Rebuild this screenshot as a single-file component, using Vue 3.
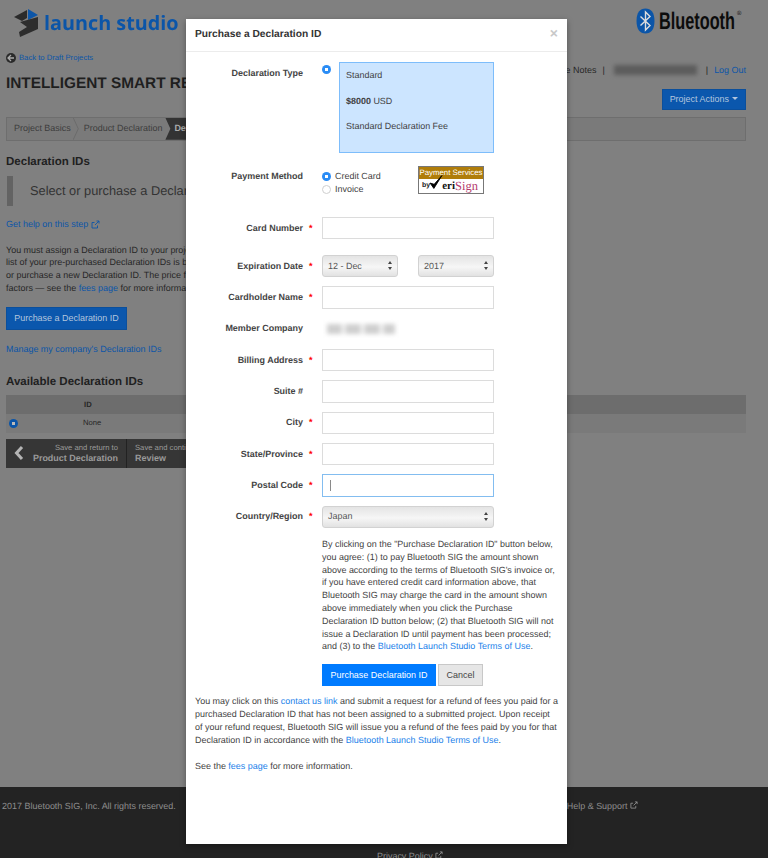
<script setup>
const rows = [
  { label: "Card Number", required: true, top: 16 },
  { label: "Expiration Date", required: true, kind: "expiry" },
  { label: "Cardholder Name", required: true },
  { label: "Member Company", kind: "company" },
  { label: "Billing Address", required: true },
  { label: "Suite #" },
  { label: "City", required: true },
  { label: "State/Province", required: true },
  { label: "Postal Code", required: true, kind: "focus" },
  { label: "Country/Region", required: true, kind: "country" },
];
</script>

<template>
  <div class="page">
    <header class="top">
      <div class="brand">
        <svg class="ls-mark" width="26" height="30" viewBox="0 0 26 30">
          <polygon points="1,9 14,2 14,10 9,13" fill="#2b2b2b" />
          <polygon points="15,1 25,7 15,12" fill="#0b55a8" />
          <polygon points="7,14 25,9 25,21 7,29 6,24 14,19" fill="#2d2d2d" />
        </svg>
        <span class="ls-name">launch studio</span>
      </div>
      <div class="bt">
        <svg width="19" height="26" viewBox="0 0 19 26">
          <path d="M9.5 0.5C15 0.5 18.5 4.5 18.5 13S15 25.5 9.5 25.5 0.5 21.5 0.5 13 4 0.5 9.5 0.5Z" fill="#0b55a8" />
          <path d="M4.5 8.5L14 17.5 9.5 22V4L14 8.5 4.5 17.5" fill="none" stroke="#ddd" stroke-width="1.4" />
        </svg>
        <svg class="bt-word" width="84" height="26" viewBox="0 0 84 26">
          <text x="0" y="21" textLength="76" lengthAdjust="spacingAndGlyphs" class="bt-text">Bluetooth</text>
          <text x="78" y="7" class="bt-reg">®</text>
        </svg>
      </div>
    </header>

    <a class="back link">
      <svg width="10" height="10" viewBox="0 0 10 10">
        <circle cx="5" cy="5" r="5" fill="#2a2a2a" />
        <path d="M5 2L2 5 5 8M2.4 5H8" fill="none" stroke="#aaa" stroke-width="1.3" />
      </svg>
      Back to Draft Projects
    </a>

    <div class="title-row">
      <h1>INTELLIGENT SMART REMOTE</h1>
      <div class="user">
        <span>Release Notes</span>
        <span class="sep">|</span>
        <span class="blurred"></span>
        <span class="sep">|</span>
        <a class="link">Log Out</a>
      </div>
    </div>
    <div class="actions-row">
      <button class="btn-blue actions">Project Actions <i class="caret"></i></button>
    </div>

    <nav class="crumbs">
      <span class="crumb">Project Basics</span>
      <span class="chev"></span>
      <span class="crumb">Product Declaration</span>
      <span class="crumb current">Declaration IDs</span>
    </nav>

    <h2>Declaration IDs</h2>
    <div class="callout">Select or purchase a Declaration ID</div>
    <a class="link help">Get help on this step
      <svg width="9" height="9" viewBox="0 0 9 9" fill="none" stroke="#0b55a8" stroke-width="0.9">
        <path d="M6.5 5.5V8H1V2.5H3.5M4 5L8 1M5.5 1H8V3.5" />
      </svg>
    </a>
    <p class="intro">
      You must assign a Declaration ID to your project before it can be submitted. A<br />
      list of your pre-purchased Declaration IDs is below.<br />
      or purchase a new Declaration ID. The price for a Declaration ID depends on several<br />
      factors — see the <a class="link">fees page</a> for more information.
    </p>
    <button class="btn-blue purchase">Purchase a Declaration ID</button>
    <a class="link manage">Manage my company's Declaration IDs</a>

    <h2 class="avail">Available Declaration IDs</h2>
    <div class="table-head"><span>ID</span></div>
    <div class="table-row">
      <span class="dot"></span>
      <span>None</span>
    </div>
    <div class="save-bar">
      <div class="save back-save">
        <svg width="10" height="16" viewBox="0 0 10 16">
          <path d="M8 2L2.5 8 8 14" fill="none" stroke="#b5b5b5" stroke-width="3" />
        </svg>
        <div class="save-text right"><small>Save and return to</small><b>Product Declaration</b></div>
      </div>
      <div class="save">
        <div class="save-text"><small>Save and continue to</small><b>Review</b></div>
      </div>
    </div>

    <footer class="foot">
      <div class="foot-row">
        <span class="copy">© 2017 Bluetooth SIG, Inc. All rights reserved.</span>
        <span class="support">Help &amp; Support
          <svg width="8" height="8" viewBox="0 0 9 9" fill="none" stroke="#999" stroke-width="0.9">
            <path d="M6.5 5.5V8H1V2.5H3.5M4 5L8 1M5.5 1H8V3.5" />
          </svg>
        </span>
      </div>
      <div class="privacy">Privacy Policy
        <svg width="8" height="8" viewBox="0 0 9 9" fill="none" stroke="#999" stroke-width="0.9">
          <path d="M6.5 5.5V8H1V2.5H3.5M4 5L8 1M5.5 1H8V3.5" />
        </svg>
      </div>
    </footer>

    <section class="modal">
      <div class="modal-head">
        <span class="modal-title">Purchase a Declaration ID</span>
        <span class="close">×</span>
      </div>

      <div class="type-row">
        <label class="field-label">Declaration Type</label>
        <span class="radio on type-radio"></span>
        <div class="type-box">
          <p>Standard</p>
          <p><b>$8000</b> USD</p>
          <p>Standard Declaration Fee</p>
        </div>
      </div>

      <div class="pay-row">
        <label class="field-label">Payment Method</label>
        <div class="pay-options">
          <div class="opt"><span class="radio on"></span>Credit Card</div>
          <div class="opt"><span class="radio"></span>Invoice</div>
        </div>
        <div class="verisign">
          <div class="vs-top">Payment Services</div>
          <div class="vs-bottom">
            <span class="vs-by">by</span>
            <svg class="vs-check" width="14" height="17" viewBox="0 0 13 15">
              <path d="M1 8L4.5 13 12 1 4.8 9.2Z" fill="#000" stroke="#000" stroke-width="0.8" />
            </svg>
            <span class="vs-v">eri</span><span class="vs-s">Sign</span>
          </div>
        </div>
      </div>

      <div
        v-for="row in rows"
        :key="row.label"
        class="form-row"
        :class="{ 'tall-gap': row.top, 'expiry-row': row.kind === 'expiry' }"
      >
        <label class="field-label">{{ row.label }}</label>
        <span class="star">{{ row.required ? "*" : "" }}</span>
        <div v-if="row.kind === 'expiry'" class="expiry">
          <div class="select"><span>12 - Dec</span><i class="updown"></i></div>
          <div class="select"><span>2017</span><i class="updown"></i></div>
        </div>
        <div v-else-if="row.kind === 'company'" class="company"></div>
        <div v-else-if="row.kind === 'country'" class="select wide"><span>Japan</span><i class="updown"></i></div>
        <div v-else class="input" :class="{ focus: row.kind === 'focus' }">
          <i v-if="row.kind === 'focus'" class="cursor"></i>
        </div>
      </div>

      <p class="terms">
        By clicking on the "Purchase Declaration ID" button below,<br />
        you agree: (1) to pay Bluetooth SIG the amount shown<br />
        above according to the terms of Bluetooth SIG's invoice or,<br />
        if you have entered credit card information above, that<br />
        Bluetooth SIG may charge the card in the amount shown<br />
        above immediately when you click the Purchase<br />
        Declaration ID button below; (2) that Bluetooth SIG will not<br />
        issue a Declaration ID until payment has been processed;<br />
        and (3) to the <a class="mlink">Bluetooth Launch Studio Terms of Use</a>.
      </p>

      <div class="modal-buttons">
        <button class="confirm">Purchase Declaration ID</button>
        <button class="cancel">Cancel</button>
      </div>

      <p class="refund">
        You may click on this <a class="mlink">contact us link</a> and submit a request for a refund of fees you paid for a<br />
        purchased Declaration ID that has not been assigned to a submitted project. Upon receipt<br />
        of your refund request, Bluetooth SIG will issue you a refund of the fees paid by you for that<br />
        Declaration ID in accordance with the <a class="mlink">Bluetooth Launch Studio Terms of Use</a>.
      </p>
      <p class="refund see">See the <a class="mlink">fees page</a> for more information.</p>
    </section>
  </div>
</template>

<style>
html,
body {
  margin: 0;
  height: 100%;
  overflow: hidden;
}
</style>

<style scoped>
.page {
  position: relative;
  width: 768px;
  height: 858px;
  overflow: hidden;
  background: #808080;
  color: #262626;
  font-family: "Liberation Sans", Arial, sans-serif;
  font-size: 8.96px;
  line-height: 12.8px;
  text-rendering: geometricPrecision;
  display: flex;
  flex-direction: column;
}

.link {
  color: #0b55a8;
}

.top {
  height: 48px;
  padding: 7px 25px 0 13px;
  box-sizing: border-box;
  display: flex;
  justify-content: space-between;
  flex-shrink: 0;
}

.brand {
  display: flex;
  align-items: center;
  height: 32px;
  gap: 5px;
  filter: blur(0.3px);
}

.ls-name {
  font-family: "Open Sans", sans-serif;
  font-weight: 700;
  font-size: 19.8px;
  color: #0b55a8;
}

.bt {
  display: flex;
  gap: 4px;
  margin-top: 1px;
  height: 26px;
}

.bt-text {
  font-family: "Liberation Sans", sans-serif;
  font-weight: 700;
  font-size: 24px;
  fill: #0c0c0c;
}

.bt-reg {
  font-size: 6px;
  fill: #0c0c0c;
}

.back {
  display: flex;
  align-items: center;
  gap: 3px;
  margin: 4px 0 0 6px;
  font-size: 7.68px;
}

.title-row {
  display: flex;
  justify-content: space-between;
  align-items: flex-start;
  margin: 9px 22px 0 6px;
  height: 20px;
}

h1 {
  margin: 0;
  font-size: 15.36px;
  line-height: 20px;
  color: #1f1f1f;
  white-space: nowrap;
}

.user {
  display: flex;
  align-items: center;
  gap: 6px;
  margin-top: -10px;
}

.sep {
  color: #262626;
}

.blurred {
  width: 83px;
  height: 10px;
  margin: 0 3px;
  background: #5c5c5c;
  filter: blur(2px);
}

.actions-row {
  display: flex;
  justify-content: flex-end;
  margin: -5px 22px 0 0;
}

.btn-blue {
  border: 1px solid #0b4f9c;
  background: #0b57ad;
  color: #b4c6dd;
  font: inherit;
  padding: 0;
}

.actions {
  width: 84px;
  height: 21px;
}

.caret {
  display: inline-block;
  border: 3px solid transparent;
  border-top-color: #b4c6dd;
  border-bottom: 0;
  vertical-align: 2px;
  margin-left: 1px;
}

.crumbs {
  display: flex;
  align-items: center;
  height: 24px;
  box-sizing: border-box;
  margin: 7px 22px 0 6px;
  padding-left: 7px;
  background: #7a7a7a;
  border: 1px solid #6e6e6e;
  color: #3c3c3c;
  flex-shrink: 0;
}

.chev {
  width: 6px;
  height: 22px;
  margin: 0 5px 0 2px;
  background: #6a6a6a;
  clip-path: polygon(0 0, 15% 0, 100% 50%, 15% 100%, 0 100%, 85% 50%);
}

.crumb.current {
  margin-left: 3px;
  padding: 0 12px 0 9px;
  background: #333;
  color: #aaa;
  align-self: stretch;
  display: flex;
  align-items: center;
  font-weight: 700;
  clip-path: polygon(0 0, 100% 0, 100% 100%, 0 100%, 5px 50%);
}

h2 {
  margin: 13px 0 0 6px;
  font-size: 11.52px;
  line-height: 16px;
  color: #1f1f1f;
}

.callout {
  height: 30px;
  margin: 6px 0 0 7px;
  padding-left: 17px;
  border-left: 6px solid #636363;
  font-size: 12.8px;
  line-height: 30px;
  color: #333;
  white-space: nowrap;
  flex-shrink: 0;
}

.help {
  margin: 12px 0 0 6px;
  display: flex;
  align-items: center;
  gap: 3px;
}

.intro {
  margin: 13px 0 0 6px;
  white-space: nowrap;
}

.purchase {
  width: 121px;
  height: 23px;
  margin: 12px 0 0 6px;
  flex-shrink: 0;
}

.manage {
  margin: 13px 0 0 6px;
}

.avail {
  margin-top: 18px;
}

.table-head {
  height: 19px;
  margin: 5px 22px 0 6px;
  background: #6d6d6d;
  padding-left: 78px;
  line-height: 19px;
  font-size: 7.68px;
  font-weight: 700;
  flex-shrink: 0;
}

.table-row {
  height: 19px;
  margin: 0 22px 0 6px;
  background: #7a7a7a;
  display: flex;
  align-items: center;
  gap: 65px;
  padding-left: 3px;
  font-size: 7.68px;
  flex-shrink: 0;
}

.dot {
  width: 9px;
  height: 9px;
  border-radius: 50%;
  background: #0b55a8 radial-gradient(circle, #bbb 1.5px, transparent 2px);
  margin-top: 1px;
}

.save-bar {
  display: flex;
  margin: 6px 0 0 6px;
  height: 29px;
  flex-shrink: 0;
}

.save {
  background: #363636;
  display: flex;
  align-items: center;
  padding: 0 8px;
  width: 220px;
  border-left: 1px solid #222;
  box-sizing: border-box;
}

.back-save {
  width: 120px;
  border-left: 0;
  justify-content: space-between;
  padding: 0 8px 0 8px;
}

.save-text {
  display: flex;
  flex-direction: column;
  color: #9a9a9a;
  line-height: 11px;
  white-space: nowrap;
}

.save-text.right {
  align-items: flex-end;
}

.save-text small {
  font-size: 7.68px;
}

.save-text b {
  font-size: 8.96px;
}

.foot {
  position: absolute;
  left: 0;
  right: 0;
  top: 787px;
  height: 71px;
  background: #232323;
  color: #8e8e8e;
  font-size: 8.96px;
}

.foot-row {
  display: flex;
  justify-content: space-between;
  padding: 13px 130px 0 0;
}

.copy {
  margin-left: -7px;
}

.privacy {
  position: absolute;
  top: 63px;
  left: 377px;
  white-space: nowrap;
}

.modal {
  position: absolute;
  left: 186px;
  top: 19px;
  width: 381px;
  height: 825px;
  background: #fff;
  box-shadow: 0 2px 6px rgba(0, 0, 0, 0.35);
  color: #3f3f3f;
  font-size: 8.96px;
  line-height: 12.8px;
}

.modal-head {
  height: 33px;
  box-sizing: border-box;
  border-bottom: 1px solid #ececec;
  padding: 0 9px;
  display: flex;
  justify-content: space-between;
  align-items: center;
}

.modal-title {
  font-size: 10.24px;
  font-weight: 700;
  color: #333;
  margin-top: 1px;
}

.close {
  font-size: 14px;
  font-weight: 700;
  color: #c9c9c9;
  margin-top: -3px;
}

.field-label {
  width: 117px;
  flex-shrink: 0;
  text-align: right;
  font-weight: 700;
  color: #444;
}

.type-row {
  display: flex;
  margin-top: 10px;
  height: 91px;
}

.type-row .field-label {
  padding-top: 5px;
}

.radio {
  display: inline-block;
  width: 9px;
  height: 9px;
  box-sizing: border-box;
  border-radius: 50%;
  border: 1px solid #cfcfcf;
  background: #fff;
  flex-shrink: 0;
}

.radio.on {
  border: 0;
  background: #2a8cf5 radial-gradient(circle, #fff 1.5px, transparent 2px);
}

.type-radio {
  margin: 3px 8px 0 19px;
}

.type-box {
  width: 155px;
  height: 91px;
  box-sizing: border-box;
  background: #cce5ff;
  border: 1px solid #7dbdfb;
  padding: 6px 6px;
  white-space: nowrap;
}

.type-box p {
  margin: 0 0 12.8px;
}

.pay-row {
  display: flex;
  margin-top: 12px;
  height: 31px;
  position: relative;
}

.pay-row .field-label {
  padding-top: 5px;
}

.pay-options {
  margin: 5px 0 0 19px;
  width: 96px;
  flex-shrink: 0;
}

.opt {
  display: flex;
  align-items: center;
  gap: 4px;
  height: 13px;
}

.verisign {
  width: 66px;
  height: 28px;
  box-sizing: border-box;
  border: 1px solid #777;
  margin-top: 1px;
  overflow: hidden;
}

.vs-top {
  height: 12px;
  background: #b07d0a;
  color: #fff;
  font-size: 7.8px;
  line-height: 12px;
  text-align: center;
  white-space: nowrap;
}

.vs-bottom {
  position: relative;
  height: 14px;
  padding-left: 3px;
  display: flex;
  align-items: center;
  font-family: "Liberation Serif", serif;
  white-space: nowrap;
}

.vs-by {
  font-family: "Liberation Sans", sans-serif;
  font-weight: 700;
  font-size: 7px;
  color: #222;
  margin-right: 12px;
}

.vs-check {
  position: absolute;
  left: 10px;
  top: -5px;
}

.vs-v {
  font-size: 11px;
  font-weight: 700;
  color: #111;
}

.vs-s {
  font-size: 12.5px;
  color: #b4386c;
}

.form-row {
  display: flex;
  align-items: center;
  height: 22.4px;
  margin-top: 8.96px;
}

.tall-gap {
  margin-top: 21px;
}

.expiry-row {
  margin-top: 15.4px;
}

.star {
  width: 19px;
  flex-shrink: 0;
  color: #f00;
  font-weight: 700;
  padding-left: 6px;
  box-sizing: border-box;
}

.input {
  width: 172px;
  height: 22.4px;
  box-sizing: border-box;
  border: 1px solid #dcdcdc;
  display: flex;
  align-items: center;
  padding-left: 7px;
}

.input.focus {
  border-color: #83bdf0;
}

.cursor {
  width: 1px;
  height: 11px;
  background: #8a8a8a;
}

.expiry {
  display: flex;
  justify-content: space-between;
  width: 172px;
}

.select {
  width: 76px;
  height: 22.4px;
  box-sizing: border-box;
  border: 1px solid #d2d2d2;
  border-radius: 3px;
  background: linear-gradient(#e4e4e4, #f6f6f6 55%, #e2e2e2);
  display: flex;
  justify-content: space-between;
  align-items: center;
  padding: 0 5px;
  color: #555;
}

.select.wide {
  width: 172px;
}

.updown {
  width: 0;
  height: 9px;
  border-left: 2.5px solid transparent;
  border-right: 2.5px solid transparent;
  position: relative;
}

.updown::before,
.updown::after {
  content: "";
  position: absolute;
  left: -2.5px;
  border-left: 2.5px solid transparent;
  border-right: 2.5px solid transparent;
}

.updown::before {
  top: 0;
  border-bottom: 3.5px solid #444;
}

.updown::after {
  bottom: 0;
  border-top: 3.5px solid #444;
}

.company {
  width: 68px;
  height: 10px;
  margin-left: 5px;
  background: repeating-linear-gradient(90deg, #cfcfcf 0 14px, #ececec 14px 19px);
  filter: blur(2px);
}

.terms {
  margin: 10px 0 0 136px;
  white-space: nowrap;
}

.modal-buttons {
  display: flex;
  gap: 2px;
  margin: 11px 0 0 136px;
}

.confirm {
  width: 114px;
  height: 22.4px;
  border: 0;
  background: #007bff;
  color: #fff;
  font: inherit;
  padding: 0;
}

.cancel {
  width: 45px;
  height: 22.4px;
  box-sizing: border-box;
  border: 1px solid #c8c8c8;
  background: #e6e6e6;
  color: #444;
  font: inherit;
  padding: 0;
}

.refund {
  margin: 9px 0 0 9px;
  white-space: nowrap;
}

.see {
  margin-top: 13px;
}

.mlink {
  color: #1a7fea;
}
</style>
